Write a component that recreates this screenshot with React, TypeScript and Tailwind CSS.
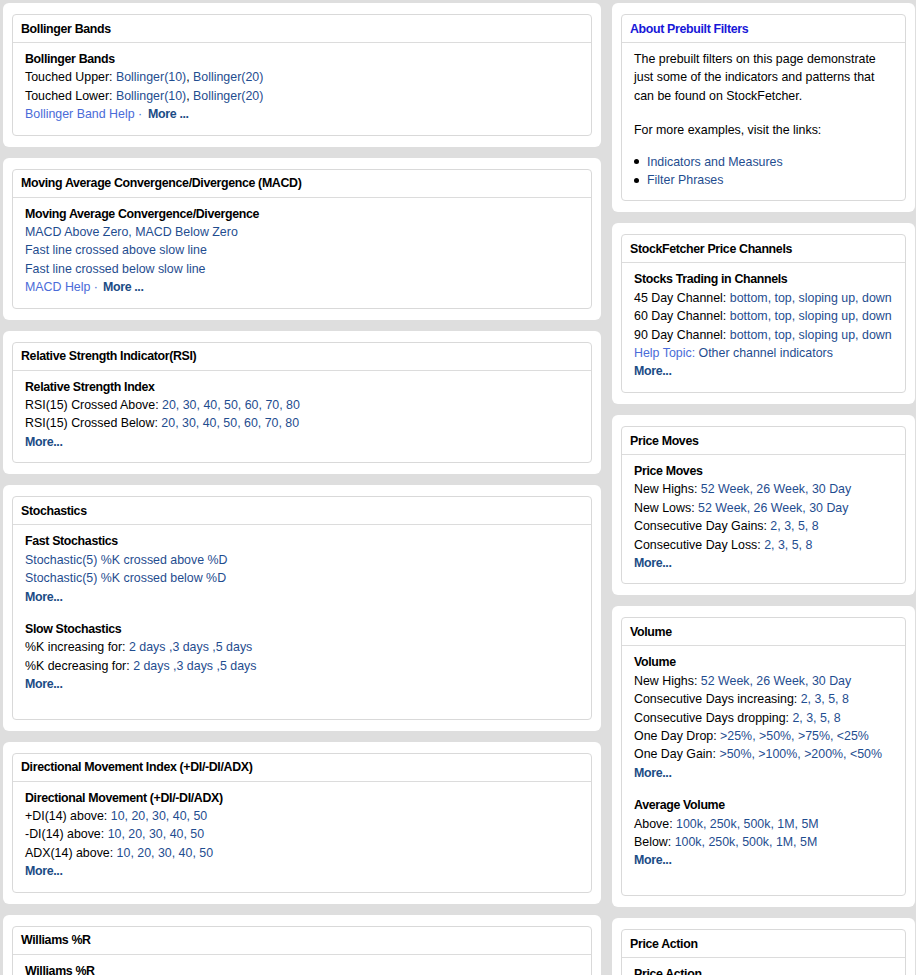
import React from "react";

const FONT = { fontFamily: '"Liberation Sans", Arial, sans-serif' };

function L({ children }: { children: React.ReactNode }) {
  return <span className="text-[#1f4d8f]">{children}</span>;
}
function H({ children }: { children: React.ReactNode }) {
  return <span className="text-[#4a6bd8]">{children}</span>;
}
function M({ label = "More..." }: { label?: string }) {
  return <span className="font-bold tracking-[-0.35px] text-[#1b4c85]">{label}</span>;
}
function T({ children }: { children: React.ReactNode }) {
  return <div className="font-bold tracking-[-0.35px] text-black">{children}</div>;
}

function Card({
  title,
  blue,
  children,
}: {
  title: string;
  blue?: boolean;
  children: React.ReactNode;
}) {
  return (
    <div className="bg-white rounded-[6px] px-[9px] pt-[11px] pb-[11px]">
      <div className="border border-[#d9d9d9] rounded-[4px]">
        <div
          className={
            "h-[28px] border-b border-[#dcdcdc] pl-[8px] pt-[1px] flex items-center font-bold tracking-[-0.35px] " +
            (blue ? "text-[#1717d8]" : "text-black")
          }
        >
          {title}
        </div>
        <div className="pl-[12px] pr-[8px] pt-[7px] pb-[11px]">{children}</div>
      </div>
    </div>
  );
}

function G({ children }: { children: React.ReactNode }) {
  return <div className="mb-[14px]">{children}</div>;
}

export default function App() {
  return (
    <div
      className="h-screen overflow-hidden bg-[#dedede] text-[12.4px] leading-[18.4px] text-black"
      style={FONT}
    >
      <div className="flex items-start pl-[3px] pt-[3px] gap-[11px]">
        {/* Left column */}
        <div className="w-[598px] flex flex-col gap-[11px]">
          <Card title="Bollinger Bands">
            <T>Bollinger Bands</T>
            <div>
              Touched Upper: <L>Bollinger(10)</L>, <L>Bollinger(20)</L>
            </div>
            <div>
              Touched Lower: <L>Bollinger(10)</L>, <L>Bollinger(20)</L>
            </div>
            <div>
              <H>Bollinger Band Help ·</H>
              <span className="ml-[6px]">
                <M label="More ..." />
              </span>
            </div>
          </Card>

          <Card title="Moving Average Convergence/Divergence (MACD)">
            <T>Moving Average Convergence/Divergence</T>
            <div>
              <L>MACD Above Zero, MACD Below Zero</L>
            </div>
            <div>
              <L>Fast line crossed above slow line</L>
            </div>
            <div>
              <L>Fast line crossed below slow line</L>
            </div>
            <div>
              <H>MACD Help ·</H>
              <span className="ml-[5px]">
                <M label="More ..." />
              </span>
            </div>
          </Card>

          <Card title="Relative Strength Indicator(RSI)">
            <T>Relative Strength Index</T>
            <div>
              RSI(15) Crossed Above: <L>20, 30, 40, 50, 60, 70, 80</L>
            </div>
            <div>
              RSI(15) Crossed Below: <L>20, 30, 40, 50, 60, 70, 80</L>
            </div>
            <div>
              <M />
            </div>
          </Card>

          <Card title="Stochastics">
            <G>
              <T>Fast Stochastics</T>
              <div>
                <L>Stochastic(5) %K crossed above %D</L>
              </div>
              <div>
                <L>Stochastic(5) %K crossed below %D</L>
              </div>
              <div>
                <M />
              </div>
            </G>
            <G>
              <T>Slow Stochastics</T>
              <div>
                %K increasing for: <L>2 days ,3 days ,5 days</L>
              </div>
              <div>
                %K decreasing for: <L>2 days ,3 days ,5 days</L>
              </div>
              <div>
                <M />
              </div>
            </G>
          </Card>

          <Card title="Directional Movement Index (+DI/-DI/ADX)">
            <T>Directional Movement (+DI/-DI/ADX)</T>
            <div>
              +DI(14) above: <L>10, 20, 30, 40, 50</L>
            </div>
            <div>
              -DI(14) above: <L>10, 20, 30, 40, 50</L>
            </div>
            <div>
              ADX(14) above: <L>10, 20, 30, 40, 50</L>
            </div>
            <div>
              <M />
            </div>
          </Card>

          <Card title="Williams %R">
            <T>Williams %R</T>
            <div>
              %R(14) crossed above: <L>-20, -50, -80</L>
            </div>
            <div>
              %R(14) crossed below: <L>-20, -50, -80</L>
            </div>
            <div>
              <M />
            </div>
          </Card>
        </div>

        {/* Right column */}
        <div className="w-[303px] flex flex-col gap-[11px]">
          <Card title="About Prebuilt Filters" blue>
            <div className="mb-[16px]">
              The prebuilt filters on this page demonstrate
              <br />
              just some of the indicators and patterns that
              <br />
              can be found on StockFetcher.
            </div>
            <div className="mb-[13px]">For more examples, visit the links:</div>
            <div className="flex items-center">
              <span className="w-[5px] h-[5px] rounded-full bg-black mr-[8px]" />
              <L>Indicators and Measures</L>
            </div>
            <div className="flex items-center">
              <span className="w-[5px] h-[5px] rounded-full bg-black mr-[8px]" />
              <L>Filter Phrases</L>
            </div>
          </Card>

          <Card title="StockFetcher Price Channels">
            <T>Stocks Trading in Channels</T>
            <div>
              45 Day Channel: <L>bottom, top, sloping up, down</L>
            </div>
            <div>
              60 Day Channel: <L>bottom, top, sloping up, down</L>
            </div>
            <div>
              90 Day Channel: <L>bottom, top, sloping up, down</L>
            </div>
            <div>
              <H>Help Topic:</H> <L>Other channel indicators</L>
            </div>
            <div>
              <M />
            </div>
          </Card>

          <Card title="Price Moves">
            <T>Price Moves</T>
            <div>
              New Highs: <L>52 Week, 26 Week, 30 Day</L>
            </div>
            <div>
              New Lows: <L>52 Week, 26 Week, 30 Day</L>
            </div>
            <div>
              Consecutive Day Gains: <L>2, 3, 5, 8</L>
            </div>
            <div>
              Consecutive Day Loss: <L>2, 3, 5, 8</L>
            </div>
            <div>
              <M />
            </div>
          </Card>

          <Card title="Volume">
            <G>
              <T>Volume</T>
              <div>
                New Highs: <L>52 Week, 26 Week, 30 Day</L>
              </div>
              <div>
                Consecutive Days increasing: <L>2, 3, 5, 8</L>
              </div>
              <div>
                Consecutive Days dropping: <L>2, 3, 5, 8</L>
              </div>
              <div>
                One Day Drop: <L>&gt;25%, &gt;50%, &gt;75%, &lt;25%</L>
              </div>
              <div>
                One Day Gain: <L>&gt;50%, &gt;100%, &gt;200%, &lt;50%</L>
              </div>
              <div>
                <M />
              </div>
            </G>
            <G>
              <T>Average Volume</T>
              <div>
                Above: <L>100k, 250k, 500k, 1M, 5M</L>
              </div>
              <div>
                Below: <L>100k, 250k, 500k, 1M, 5M</L>
              </div>
              <div>
                <M />
              </div>
            </G>
          </Card>

          <Card title="Price Action">
            <T>Price Action</T>
            <div>
              Gap Up: <L>1%, 2%, 5%</L>
            </div>
            <div>
              Gap Down: <L>1%, 2%, 5%</L>
            </div>
            <div>
              <M />
            </div>
          </Card>
        </div>
      </div>
    </div>
  );
}
